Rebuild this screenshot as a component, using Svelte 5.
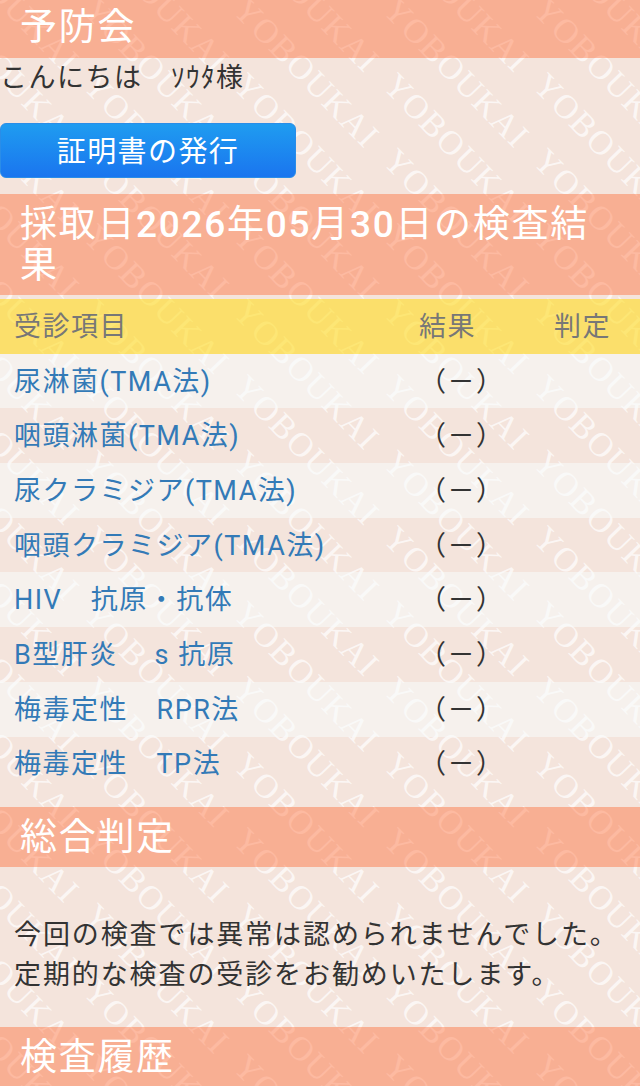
<script>
  const items = [
    '尿淋菌(TMA法)',
    '咽頭淋菌(TMA法)',
    '尿クラミジア(TMA法)',
    '咽頭クラミジア(TMA法)',
    'HIV　抗原・抗体',
    'B型肝炎　 s 抗原',
    '梅毒定性　RPR法',
    '梅毒定性　TP法'
  ];

  // 背景の透かし
  const marks = [];
  for (let r = -3; r < 16; r++) {
    for (let c = -2; c < 5; c++) {
      marks.push({ x: 81.5 + c * 150, y: 11.5 + r * 75.5 });
    }
  }
</script>

<div class="page">
  <svg class="watermark" width="640" height="1086" aria-hidden="true">
    {#each marks as m}
      <text transform="translate({m.x} {m.y}) rotate(46)">YOBOUKAI</text>
    {/each}
  </svg>

  <div class="content">
    <h2 class="title first">予防会</h2>
    <p class="hello">こんにちは　ｿｳﾀ様</p>
    <div class="actions">
      <button class="issue">証明書の発行</button>
    </div>

    <h2 class="title">採取日<span class="num">2026</span>年<span class="num">05</span>月<span class="num">30</span>日の検査結果</h2>

    <table>
      <thead>
        <tr>
          <th class="name">受診項目</th>
          <th class="res">結果</th>
          <th class="judge">判定</th>
        </tr>
      </thead>
      <tbody>
        {#each items as item}
          <tr>
            <td class="name"><a href="#top">{item}</a></td>
            <td class="res">（－）</td>
            <td class="judge"></td>
          </tr>
        {/each}
      </tbody>
    </table>

    <h2 class="title">総合判定</h2>
    <p class="summary">今回の検査では異常は認められませんでした。<br />定期的な検査の受診をお勧めいたします。</p>

    <h2 class="title">検査履歴</h2>
  </div>
</div>

<style>
  :global(body) {
    margin: 0;
    background: #f4e4dc;
    overflow: hidden;
  }
  .page {
    position: relative;
    width: 640px;
    height: 1086px;
    overflow: hidden;
    background: #f4e4dc;
    font-family: Roboto, "Noto Sans CJK JP", sans-serif;
    font-size: 27px;
    letter-spacing: 1.5px;
    color: #333;
  }
  .watermark {
    position: absolute;
    top: 0;
    left: 0;
  }
  .watermark text {
    font-family: "Liberation Serif", serif;
    font-size: 34px;
    letter-spacing: 1.4px;
    fill: #fff;
    fill-opacity: 0.7;
  }
  .content {
    position: relative;
  }
  .title {
    margin: 0;
    padding: 10px 20px 9px;
    background: rgba(255, 100, 44, 0.41);
    color: #fff;
    font-size: 37px;
    font-weight: 400;
    letter-spacing: 1.7px;
    line-height: 41px;
  }
  .num {
    font-weight: 500;
  }
  .first {
    padding-top: 0;
    padding-bottom: 0;
    line-height: 56px;
    height: 58px;
  }
  .hello {
    margin: 0;
    line-height: 40px;
  }
  .actions {
    padding: 25px 0 16px;
  }
  .issue {
    display: block;
    width: 296px;
    height: 55px;
    padding: 0 0 4px;
    border: 1px solid #2a8de8;
    border-radius: 6px;
    background: linear-gradient(#1f9cf0, #1a75ef);
    color: #fff;
    font: inherit;
    font-size: 29px;
    letter-spacing: 1.4px;
    text-align: center;
  }
  table {
    width: 640px;
    margin-top: 4px;
    margin-bottom: 15.7px;
    border-collapse: collapse;
    table-layout: fixed;
  }
  th,
  td {
    height: 54.7px;
    padding: 0 0 4px 14px;
    text-align: left;
    font-weight: 400;
    box-sizing: border-box;
    vertical-align: middle;
  }
  th {
    padding-bottom: 3px;
    background: rgba(255, 220, 32, 0.6);
    color: #777;
  }
  .name {
    width: 405px;
  }
  .res {
    width: 135px;
  }
  tbody tr:nth-child(odd) td {
    background: rgba(247, 252, 252, 0.55);
  }
  a {
    color: #337ab7;
    text-decoration: none;
  }
  .summary {
    margin: 0;
    padding: 48px 14px 32px;
    line-height: 40px;
    letter-spacing: 1.9px;
  }
</style>
